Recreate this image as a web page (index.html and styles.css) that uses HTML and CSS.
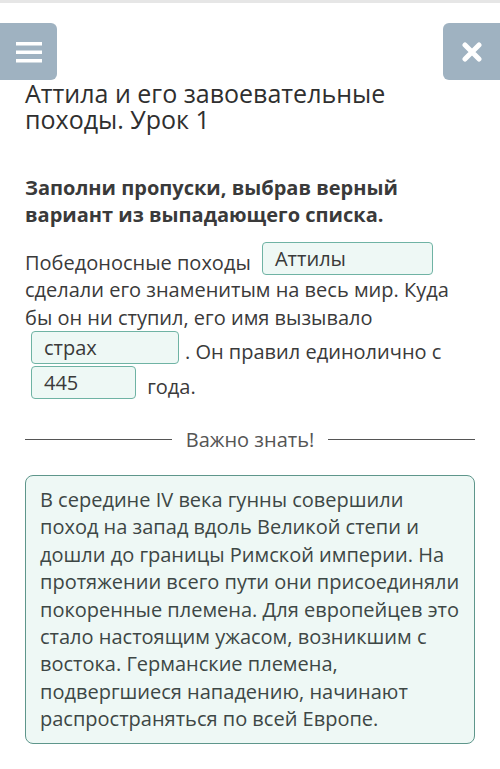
FILE: index.html
```html
<!DOCTYPE html>
<html lang="ru">
  <head>
    <meta charset="UTF-8" />
    <meta name="viewport" content="width=device-width, initial-scale=1.0" />
    <title>Аттила и его завоевательные походы. Урок 1</title>
    <link rel="stylesheet" href="styles.css">
  </head>
  <body>
    <div class="top-strip"></div>
    <header class="toolbar">
      <button class="tool-btn" aria-label="Меню">
        <svg width="26" height="24" viewBox="0 0 26 24">
          <rect x="0" y="2" width="26" height="3.5" fill="#fff" />
          <rect x="0" y="10.5" width="26" height="3.5" fill="#fff" />
          <rect x="0" y="19" width="26" height="3.5" fill="#fff" />
        </svg>
      </button>
      <button class="tool-btn" aria-label="Закрыть">
        <svg width="20" height="20" viewBox="0 0 20 20">
          <path d="M3 3 L17 17 M17 3 L3 17" stroke="#fff" stroke-width="5" stroke-linecap="round" />
        </svg>
      </button>
    </header>

    <div class="container">
      <h1 class="lesson-title">Аттила и его завоевательные походы. Урок 1</h1>

      <h2 class="task">Заполни пропуски, выбрав верный вариант из выпадающего списка.</h2>

      <p class="task-text">
        Победоносные походы <span class="blank blank-wide">Аттилы</span>
        сделали его знаменитым на весь мир. Куда бы он ни ступил, его имя вызывало
        <span class="blank blank-mid">страх</span>. Он правил единолично с
        <span class="blank blank-short">445</span> года.
      </p>

      <div class="divider">
        <span>Важно знать!</span>
      </div>

      <div class="info-box">
        В середине IV века гунны совершили поход на запад вдоль Великой степи и
        дошли до границы Римской империи. На протяжении всего пути они
        присоединяли покоренные племена. Для европейцев это стало настоящим
        ужасом, возникшим с востока. Германские племена, подвергшиеся нападению,
        начинают распространяться по всей Европе.
      </div>
    </div>
  </body>
</html>
```

FILE: styles.css
```css
body {
  font-family: "Open Sans", "Noto Sans", sans-serif;
  margin: 0;
  padding: 0;
  background: #fff;
  color: #333;
}

.top-strip {
  height: 3px;
  background: #e6e6e6;
}

.toolbar {
  display: flex;
  justify-content: space-between;
  margin-top: 20px;
}

.tool-btn {
  width: 57px;
  height: 57px;
  border: none;
  padding: 0;
  background: #9fb2c1;
  display: flex;
  align-items: center;
  justify-content: center;
}

.tool-btn:first-child {
  border-radius: 0 6px 6px 0;
}

.tool-btn:last-child {
  border-radius: 6px 0 0 6px;
}

.container {
  padding: 0 25px;
}

.lesson-title {
  font-size: 25px;
  font-weight: 400;
  line-height: 26px;
  margin: 0;
  color: #2f2f2f;
}

.task {
  font-size: 20px;
  font-weight: 700;
  line-height: 27px;
  margin: 42px 0 0;
  color: #3a3a3a;
}

.task-text {
  font-size: 20px;
  line-height: 27.4px;
  margin: 14px 0 0;
  color: #3a3a3a;
}

.blank {
  display: inline-block;
  box-sizing: border-box;
  height: 33px;
  padding: 2px 12px 0;
  margin: 0 6px;
  line-height: 28px;
  border: 1px solid #6fb3a4;
  border-radius: 4px;
  background: #eef8f5;
  color: #3a3a3a;
  vertical-align: 4px;
}

.blank-wide {
  width: 171px;
}

.blank-mid {
  width: 148px;
}

.blank-short {
  width: 105px;
}

.divider {
  display: flex;
  align-items: center;
  gap: 14px;
  margin-top: 26px;
  font-size: 20px;
  color: #555;
}

.divider::before,
.divider::after {
  content: "";
  flex: 1;
  height: 1px;
  background: #555;
}

.info-box {
  margin-top: 22px;
  padding: 10px 14px;
  font-size: 20px;
  line-height: 27.4px;
  color: #3d4745;
  background: #eef8f5;
  border: 1px solid #5e968b;
  border-radius: 8px;
}
```
